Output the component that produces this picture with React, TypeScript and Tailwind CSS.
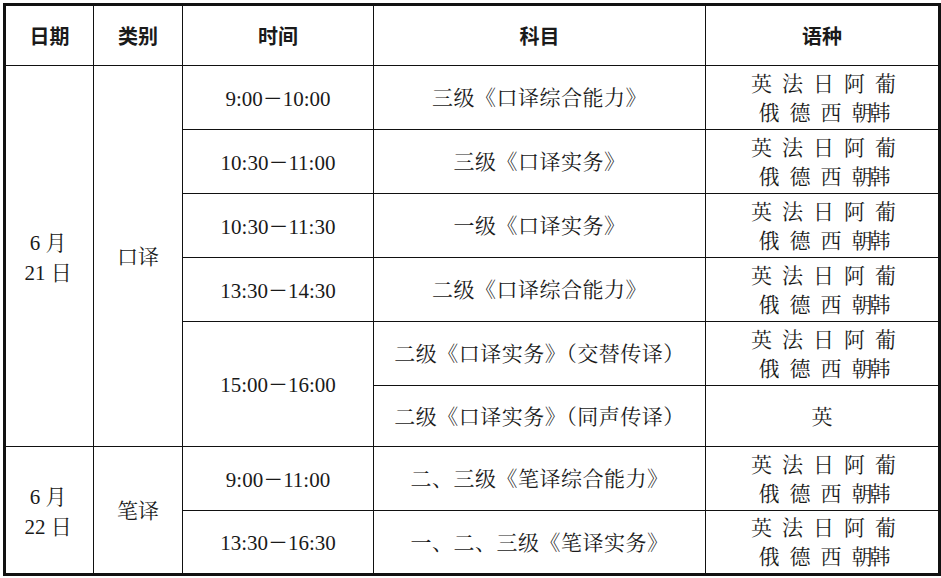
const serif = "font-['Liberation_Serif','Noto_Serif_CJK_SC','Noto_Sans_CJK_SC',serif]";
const cell = "border-[1.5px] border-[#111] text-center align-middle p-0 pt-[3px]";
const langCell = "border-[1.5px] border-[#111] text-center align-middle p-0";

function Langs() {
  return (
    <div className="flex flex-col items-center leading-[29px] text-[21px] pt-[2px]">
      <div className="flex gap-[10px] pl-[3px]">
        <span>英</span>
        <span>法</span>
        <span>日</span>
        <span>阿</span>
        <span>葡</span>
      </div>
      <div className="flex gap-[10px] pl-[2px]">
        <span>俄</span>
        <span>德</span>
        <span>西</span>
        <span className="tracking-[-3px]">朝韩</span>
      </div>
    </div>
  );
}

function Time({ t }: { t: string }) {
  const [a, b] = t.split("-");
  return (
    <span className="text-[21px]">
      {a}
      <span className="font-['Noto_Sans_CJK_SC',sans-serif] text-[20px]">－</span>
      {b}
    </span>
  );
}

function DateCell({ d }: { d: string }) {
  return (
    <div className="flex flex-col items-center leading-[30px] text-[21px] pr-[3px]">
      <span>6 月</span>
      <span>{d} 日</span>
    </div>
  );
}

export default function App() {
  const head =
    "border-[1.5px] border-[#111] text-center align-middle p-0 font-['Noto_Sans_CJK_SC',sans-serif] font-bold text-[20px]";
  const subj = "text-[21px] tracking-[0.5px]";
  return (
    <div className="bg-white w-[941px] h-[578px] pt-[3px] pl-[3px]">
      <table
        className={`table-fixed border-collapse border-[3px] border-[#111] w-[935px] text-[#1a1a1a] ${serif}`}
      >
        <colgroup>
          <col className="w-[89px]" />
          <col className="w-[89px]" />
          <col className="w-[191px]" />
          <col className="w-[332px]" />
          <col className="w-[234px]" />
        </colgroup>
        <tbody>
          <tr className="h-[61px]">
            <td className={head}>日期</td>
            <td className={head}>类别</td>
            <td className={head}>时间</td>
            <td className={head}>科目</td>
            <td className={head}>语种</td>
          </tr>
          <tr className="h-[64px]">
            <td className={cell} rowSpan={6}>
              <DateCell d="21" />
            </td>
            <td className={`${cell} text-[21px]`} rowSpan={6}>
              口译
            </td>
            <td className={cell}>
              <Time t="9:00-10:00" />
            </td>
            <td className={`${cell} ${subj}`}>三级《口译综合能力》</td>
            <td className={langCell}>
              <Langs />
            </td>
          </tr>
          <tr className="h-[64px]">
            <td className={cell}>
              <Time t="10:30-11:00" />
            </td>
            <td className={`${cell} ${subj}`}>三级《口译实务》</td>
            <td className={langCell}>
              <Langs />
            </td>
          </tr>
          <tr className="h-[64px]">
            <td className={cell}>
              <Time t="10:30-11:30" />
            </td>
            <td className={`${cell} ${subj}`}>一级《口译实务》</td>
            <td className={langCell}>
              <Langs />
            </td>
          </tr>
          <tr className="h-[64px]">
            <td className={cell}>
              <Time t="13:30-14:30" />
            </td>
            <td className={`${cell} ${subj}`}>二级《口译综合能力》</td>
            <td className={langCell}>
              <Langs />
            </td>
          </tr>
          <tr className="h-[64px]">
            <td className={cell} rowSpan={2}>
              <Time t="15:00-16:00" />
            </td>
            <td className={`${cell} ${subj}`}>二级《口译实务》（交替传译）</td>
            <td className={langCell}>
              <Langs />
            </td>
          </tr>
          <tr className="h-[61px]">
            <td className={`${cell} ${subj}`}>二级《口译实务》（同声传译）</td>
            <td className={`${cell} text-[21px]`}>英</td>
          </tr>
          <tr className="h-[64px]">
            <td className={cell} rowSpan={2}>
              <DateCell d="22" />
            </td>
            <td className={`${cell} text-[21px]`} rowSpan={2}>
              笔译
            </td>
            <td className={cell}>
              <Time t="9:00-11:00" />
            </td>
            <td className={`${cell} ${subj}`}>二、三级《笔译综合能力》</td>
            <td className={langCell}>
              <Langs />
            </td>
          </tr>
          <tr className="h-[64px]">
            <td className={cell}>
              <Time t="13:30-16:30" />
            </td>
            <td className={`${cell} ${subj}`}>一、二、三级《笔译实务》</td>
            <td className={langCell}>
              <Langs />
            </td>
          </tr>
        </tbody>
      </table>
    </div>
  );
}
